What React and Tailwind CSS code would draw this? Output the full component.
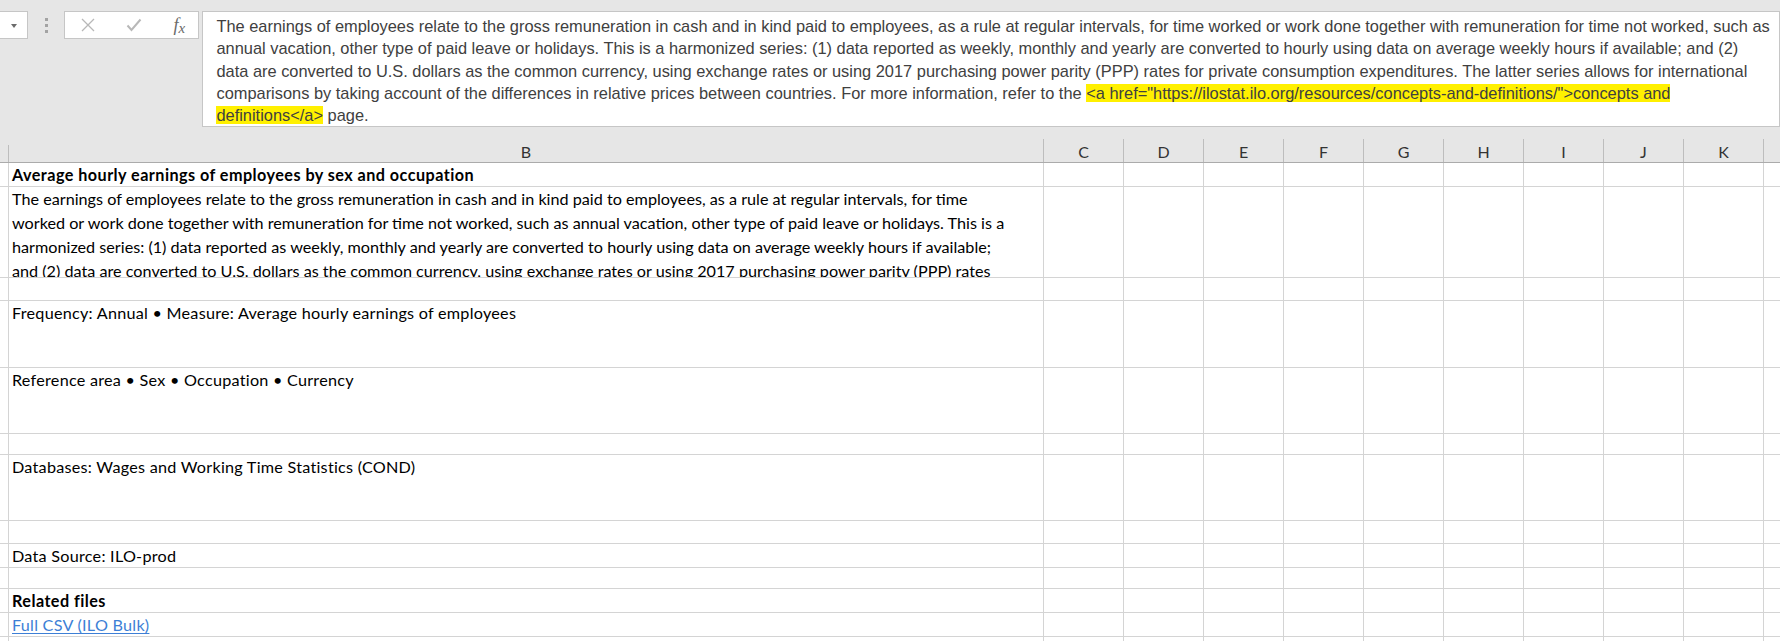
const COLS = ['C', 'D', 'E', 'F', 'G', 'H', 'I', 'J', 'K'];

const FORMULA_LINES = [
  'The earnings of employees relate to the gross remuneration in cash and in kind paid to employees, as a rule at regular intervals, for time worked or work done together with remuneration for time not worked, such as',
  'annual vacation, other type of paid leave or holidays. This is a harmonized series: (1) data reported as weekly, monthly and yearly are converted to hourly using data on average weekly hours if available; and (2)',
  'data are converted to U.S. dollars as the common currency, using exchange rates or using 2017 purchasing power parity (PPP) rates for private consumption expenditures. The latter series allows for international',
];

const DESC_LINES = [
  'The earnings of employees relate to the gross remuneration in cash and in kind paid to employees, as a rule at regular intervals, for time',
  'worked or work done together with remuneration for time not worked, such as annual vacation, other type of paid leave or holidays. This is a',
  'harmonized series: (1) data reported as weekly, monthly and yearly are converted to hourly using data on average weekly hours if available;',
  'and (2) data are converted to U.S. dollars as the common currency, using exchange rates or using 2017 purchasing power parity (PPP) rates',
];

function FormulaBar() {
  return (
    <div className="flex items-start h-[139px] bg-[#e6e6e6] pt-[11px]">
      <div className="relative w-[28px] h-[28px] bg-white border border-l-0 border-[#c6c6c6]">
        <span className="absolute left-[11px] top-[12px] w-0 h-0 border-l-[3.5px] border-r-[3.5px] border-t-[4px] border-l-transparent border-r-transparent border-t-[#6b6b6b]" />
      </div>
      <div className="w-[36px] h-[28px] flex flex-col items-center justify-center gap-[3px] pl-[1px]">
        <span className="w-[3px] h-[3px] bg-[#a3a3a3]" />
        <span className="w-[3px] h-[3px] bg-[#a3a3a3]" />
        <span className="w-[3px] h-[3px] bg-[#a3a3a3]" />
      </div>
      <div className="w-[137px] h-[28px] bg-white border border-[#c6c6c6] flex items-center">
        <svg width="14" height="14" viewBox="0 0 14 14" className="ml-[16px]">
          <path d="M1 1 L13 13 M13 1 L1 13" stroke="#b8b8b8" strokeWidth="1.3" fill="none" />
        </svg>
        <svg width="16" height="14" viewBox="0 0 16 14" className="ml-[31px]">
          <path d="M1.5 7.5 L5.5 12 L14.5 1.5" stroke="#b8b8b8" strokeWidth="2" fill="none" />
        </svg>
        <span className="ml-[32px] text-[18px] leading-none italic text-[#6a6a6a] font-['Liberation_Serif',serif]">
          f<span className="text-[15px] relative top-[2px]">x</span>
        </span>
      </div>
      <div className="ml-[3px] w-[1590px] h-[116px] bg-white border border-[#c6c6c6] pl-[13px] pt-[3px] font-['Liberation_Sans',Arial,sans-serif] text-[16.4px] leading-[22.3px] text-[#404040]">
        {FORMULA_LINES.map((l) => (
          <div key={l} className="whitespace-nowrap">{l}</div>
        ))}
        <div className="whitespace-nowrap">
          comparisons by taking account of the differences in relative prices between countries. For more information, refer to the{' '}
          <span className="bg-[#fff000]">&lt;a href="https://ilostat.ilo.org/resources/concepts-and-definitions/"&gt;concepts and</span>
        </div>
        <div className="whitespace-nowrap">
          <span className="bg-[#fff000]">definitions&lt;/a&gt;</span> page.
        </div>
      </div>
    </div>
  );
}

function HeaderRow() {
  return (
    <div className="flex h-[24px] bg-[#e6e6e6] border-b border-[#ababab] text-[16px] text-[#333] font-['Lato',sans-serif]">
      <div className="w-[9px] pt-[6px]">
        <div className="h-full border-r border-[#bdbdbd]" />
      </div>
      <div className="w-[1035px] flex justify-center items-center pt-[2px] border-r border-[#bdbdbd]">B</div>
      {COLS.map((c) => (
        <div key={c} className="w-[80px] flex justify-center items-center pt-[2px] border-r border-[#bdbdbd]">{c}</div>
      ))}
      <div className="flex-1" />
    </div>
  );
}

function Row({ h, children }) {
  return (
    <div className="flex border-b border-[#d4d4d4]" style={{ height: h }}>
      <div className="w-[9px] border-r border-[#d4d4d4]" />
      <div className="w-[1035px] border-r border-[#d4d4d4] pl-[3px] overflow-hidden text-[16.2px] leading-[24px] text-black whitespace-nowrap">
        {children}
      </div>
      {COLS.map((c) => (
        <div key={c} className="w-[80px] border-r border-[#d4d4d4]" />
      ))}
      <div className="flex-1" />
    </div>
  );
}

export default function App() {
  return (
    <div className="w-[1780px] h-[641px] overflow-hidden bg-white font-['Lato',sans-serif]">
      <FormulaBar />
      <HeaderRow />
      <Row h={24}>
        <span className="font-bold tracking-[0.45px]">Average hourly earnings of employees by sex and occupation</span>
      </Row>
      <Row h={91}>
        {DESC_LINES.map((l) => (
          <div key={l}>{l}</div>
        ))}
      </Row>
      <Row h={23} />
      <Row h={67}>
        <span className="tracking-[0.25px]">Frequency: Annual • Measure: Average hourly earnings of employees</span>
      </Row>
      <Row h={66}>
        <span className="tracking-[0.25px]">Reference area • Sex • Occupation • Currency</span>
      </Row>
      <Row h={21} />
      <Row h={66}>
        <span className="tracking-[0.25px]">Databases: Wages and Working Time Statistics (COND)</span>
      </Row>
      <Row h={23} />
      <Row h={24}>
        <span className="tracking-[0.25px]">Data Source: ILO-prod</span>
      </Row>
      <Row h={21} />
      <Row h={24}>
        <span className="font-bold tracking-[0.45px]">Related files</span>
      </Row>
      <Row h={24}>
        <span className="text-[#3d7fd6] underline underline-offset-2 tracking-[0.25px]">Full CSV (ILO Bulk)</span>
      </Row>
      <Row h={24} />
    </div>
  );
}
